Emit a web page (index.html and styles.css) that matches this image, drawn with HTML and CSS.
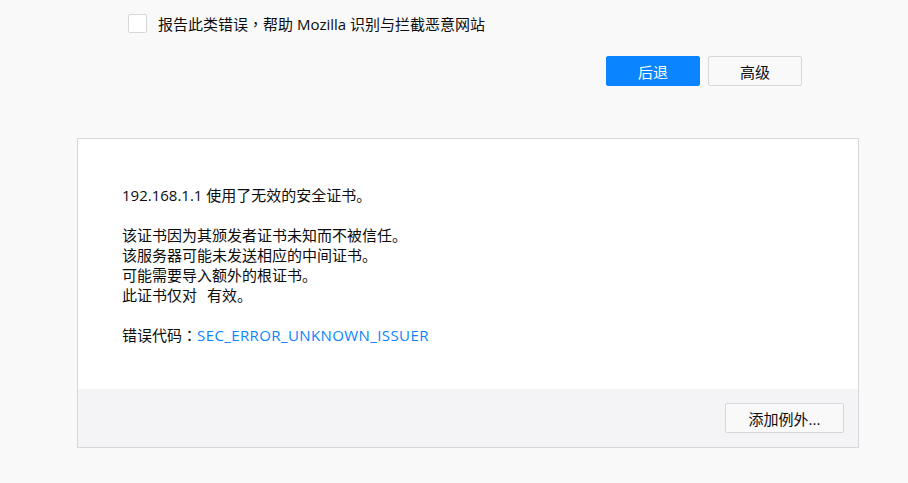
FILE: index.html
```html
<!DOCTYPE html>
<html lang="zh-CN">
<head>
    <meta charset="UTF-8">
    <title>连接不安全</title>
    <link rel="stylesheet" href="styles.css">
</head>
<body>
    <div class="container">
        <label class="report">
            <span class="checkbox"></span>
            <span>报告此类错误<span class="punct" lang="zh-TW">，</span>帮助 Mozilla 识别与拦截恶意网站</span>
        </label>

        <div class="actions">
            <button class="btn primary">后退</button>
            <button class="btn">高级</button>
        </div>

        <div class="panel">
            <div class="panel-body">
                <p>192.168.1.1 使用了无效的安全证书。</p>
                <p>该证书因为其颁发者证书未知而不被信任。<br>
                    该服务器可能未发送相应的中间证书。<br>
                    可能需要导入额外的根证书。<br>
                    此证书仅对<span class="host"></span>有效。</p>
                <p>错误代码<span class="punct" lang="zh-TW">：</span><a class="code" href="#">SEC_ERROR_UNKNOWN_ISSUER</a></p>
            </div>
            <div class="panel-footer">
                <button class="btn exception">添加例外...</button>
            </div>
        </div>
    </div>
</body>
</html>
```

FILE: styles.css
```css
* {
    margin: 0;
    padding: 0;
    box-sizing: border-box;
}

body {
    font-family: "Open Sans", "Noto Sans CJK SC", sans-serif;
    font-size: 15px;
    line-height: 20px;
    color: #0c0c0d;
    background-color: #f9f9fa;
}

/* full-width punctuation sits centred in its cell */
.punct {
    font-family: "Noto Sans CJK TC", sans-serif;
}

.container {
    width: 782px;
    margin-left: 77px;
}

.report {
    display: flex;
    align-items: center;
    margin-top: 14px;
    padding-left: 51px;
    height: 19px;
}

.checkbox {
    width: 19px;
    height: 19px;
    margin-right: 11px;
    border: 1px solid #d7d7db;
    border-radius: 2px;
    background-color: #fff;
}

.actions {
    display: flex;
    justify-content: flex-end;
    gap: 8px;
    margin-top: 23px;
    padding-right: 57px;
}

.btn {
    width: 94px;
    height: 30px;
    font-family: inherit;
    font-size: 15px;
    color: #0c0c0d;
    background-color: #f9f9fa;
    border: 1px solid #d7d7db;
    border-radius: 2px;
}

.btn.primary {
    color: #fff;
    background-color: #0a84ff;
    border-color: #0a84ff;
}

.panel {
    margin-top: 52px;
    border: 1px solid #d7d7db;
    background-color: #fff;
}

.panel-body {
    padding: 46px 44px 44px;
}

.panel-body p {
    margin-bottom: 20px;
}

.panel-body p:last-child {
    margin-bottom: 0;
}

.host {
    display: inline-block;
    width: 10px;
}

.code {
    color: #0a84ff;
    text-decoration: none;
    letter-spacing: 0.4px;
}

.panel-footer {
    display: flex;
    justify-content: flex-end;
    padding: 14px;
    background-color: #f4f4f6;
}

.btn.exception {
    width: 119px;
}
```
